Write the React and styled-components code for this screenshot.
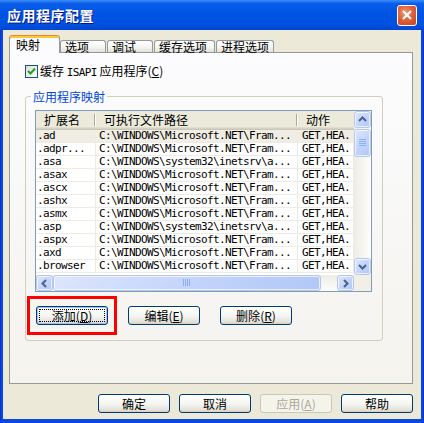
import React from 'react';
import styled, { createGlobalStyle, css } from 'styled-components';

const GlobalStyle = createGlobalStyle`
  html, body { margin: 0; padding: 0; background: #fff; }
  body {
    font-family: "SimSun", "Noto Sans CJK SC", sans-serif;
    font-size: 12px;
    color: #000;
  }
`;

const MS = 'C:\\WINDOWS\\Microsoft.NET\\Fram...';
const SYS = 'C:\\WINDOWS\\system32\\inetsrv\\a...';

const rows = [
  ['.ad', MS],
  ['.adpr...', MS],
  ['.asa', SYS],
  ['.asax', MS],
  ['.ascx', MS],
  ['.ashx', MS],
  ['.asmx', MS],
  ['.asp', SYS],
  ['.aspx', MS],
  ['.axd', MS],
  ['.browser', MS],
];

const tabs = [
  { label: '映射', w: 51, active: true },
  { label: '选项', w: 46 },
  { label: '调试', w: 46 },
  { label: '缓存选项', w: 61 },
  { label: '进程选项', w: 58 },
];

const Window = styled.div`
  width: 424px;
  height: 423px;
  box-sizing: border-box;
  background: linear-gradient(90deg, #0831D9, #0A48E0 2px, #0A48E0 calc(100% - 2px), #0831D9);
  display: flex;
  flex-direction: column;
`;

const TitleBar = styled.div`
  height: 30px;
  flex: none;
  display: flex;
  align-items: center;
  justify-content: space-between;
  padding: 0 7px 0 7px;
  background: linear-gradient(180deg, #3C8CF8 0%, #0A5DEB 12%, #0054E3 45%, #0052E0 80%, #0046D0 100%);
`;

const Title = styled.span`
  color: #fff;
  font-weight: bold;
  font-size: 14px;
  letter-spacing: 0.5px;
  text-shadow: 1px 1px 0 #0A1883;
`;

const CloseBox = styled.div`
  width: 20px;
  height: 21px;
  box-sizing: border-box;
  border: 1px solid #fff;
  border-radius: 3px;
  background: radial-gradient(circle at 40% 35%, #F09C7E 0%, #E1603A 45%, #C7401C 100%);
  display: flex;
  align-items: center;
  justify-content: center;
`;

const Body = styled.div`
  flex: 1;
  margin: 0 3px 4px;
  background: #ECE9D8;
  padding: 5px 8px 0 6px;
  display: flex;
  flex-direction: column;
`;

const TabStrip = styled.div`
  height: 18px;
  display: flex;
  align-items: flex-end;
  position: relative;
  z-index: 1;
`;

const Tab = styled.div`
  box-sizing: border-box;
  width: ${p => p.$w}px;
  border: 1px solid #919B9C;
  border-bottom: none;
  border-radius: 3px 3px 0 0;
  font-size: 12px;
  white-space: nowrap;
  ${p => p.$active ? css`
    height: 18px;
    margin-right: 0;
    padding: 2px 0 0 6px;
    line-height: 14px;
    background: #FCFCFE;
    border-top: 1px solid #E68B2C;
    box-shadow: inset 0 2px 0 #FFC73C;
  ` : css`
    height: 12px;
    margin: 0 1px 1px 0;
    padding-left: 4px;
    line-height: 11px;
    background: linear-gradient(#FFFFFF, #F3F3EF 60%, #E3E1D8);
  `}
`;

const Panel = styled.div`
  height: 332px;
  margin-top: -1px;
  box-sizing: border-box;
  border: 1px solid #919B9C;
  background: linear-gradient(#FCFCFE, #F4F3EE);
  padding: 12px 0 0 15px;
  display: flex;
  flex-direction: column;
`;

const CheckRow = styled.label`
  display: flex;
  align-items: center;
  gap: 2px;
  height: 13px;
  line-height: 13px;
`;

const CheckBox = styled.span`
  width: 13px;
  height: 13px;
  box-sizing: border-box;
  border: 1px solid #1C5180;
  background: linear-gradient(135deg, #DCDCD7, #FFFFFF);
  display: flex;
  align-items: center;
  justify-content: center;
`;

const monoText = css`
  font-family: "DejaVu Sans Mono", "Liberation Mono", monospace;
  font-size: 11px;
  letter-spacing: -0.62px;
`;

const Latin = styled.span`
  ${monoText};
`;

const Group = styled.fieldset`
  margin: 12px 0 0 0;
  width: 358px;
  box-sizing: border-box;
  border: 1px solid #D0D0BF;
  border-radius: 3px;
  padding: 0 0 15px 9px;
  min-inline-size: 0;
`;

const GroupLabel = styled.legend`
  color: #0046D5;
  padding: 0 2px;
  margin-left: -4px;
  line-height: 13px;
  font-size: 12px;
`;

const ListView = styled.div`
  margin-top: 7px;
  width: 337px;
  height: 182px;
  box-sizing: border-box;
  border: 1px solid #7F9DB9;
  background: #fff;
  display: grid;
  grid-template-columns: 318px 17px;
  grid-template-rows: 164px 16px;
`;

const TableArea = styled.div`
  overflow: hidden;
  display: flex;
  flex-direction: column;
`;

const Cols = css`
  display: grid;
  grid-template-columns: 60px 202px 56px;
`;

const Header = styled.div`
  ${Cols};
  height: 19px;
  flex: none;
  box-sizing: border-box;
  background: #EBEADB;
  box-shadow: inset 0 -1px #CBC7B8, inset 0 -2px #D6D2C2, inset 0 -3px #E2DECD;
`;

const HeaderCell = styled.div`
  padding-left: 8px;
  line-height: 17px;
  white-space: nowrap;
  overflow: hidden;
  background: ${p => p.$sep
    ? 'linear-gradient(90deg, #ACA899 50%, #fff 50%) right 0 top 3px / 2px 12px no-repeat'
    : 'none'};
`;

const Row = styled.div`
  ${Cols};
  height: 13px;
  flex: none;
  box-sizing: border-box;
  border-bottom: 1px solid #EDEBE3;
  background: ${p => p.$selected ? '#EFEDE4' : '#fff'};
`;

const Cell = styled.div`
  ${monoText};
  line-height: 12px;
  padding-left: ${p => p.$pad}px;
  white-space: nowrap;
  overflow: hidden;
  border-right: 1px solid #EDEBE3;
`;

const VScroll = styled.div`
  display: flex;
  flex-direction: column;
  background: linear-gradient(90deg, #EEEDE5, #FDFDFA);
`;

const HScroll = styled.div`
  display: flex;
  background: linear-gradient(#EEEDE5, #FDFDFA);
`;

const Corner = styled.div`
  background: #F1EFE6;
`;

const blueBlock = css`
  box-sizing: border-box;
  border: 1px solid #B4C7F1;
  border-radius: 3px;
  box-shadow: inset 0 0 0 1px rgba(255, 255, 255, 0.7);
  background: linear-gradient(135deg, #DCE6FD, #C2D3FB 55%, #B2C7F6);
  display: flex;
  align-items: center;
  justify-content: center;
`;

const ScrollBtn = styled.div`
  ${blueBlock};
  width: ${p => p.$w || 17}px;
  height: ${p => p.$h || 17}px;
  flex: none;
`;

const Track = styled.div`
  flex: 1;
  display: flex;
  flex-direction: ${p => p.$vertical ? 'column' : 'row'};
`;

const Thumb = styled.div`
  ${blueBlock};
  flex: none;
  ${p => p.$vertical ? css`
    width: 17px;
    height: 28px;
    margin-top: 1px;
  ` : css`
    width: 268px;
    height: 16px;
  `}
`;

const ButtonRow = styled.div`
  display: flex;
  gap: 20px;
  margin: 14px 0 0 1px;
`;

const HighlightWrap = styled.div`
  position: relative;
  display: flex;
`;

const RedFrame = styled.div`
  position: absolute;
  top: -10px;
  bottom: -10px;
  left: -9px;
  right: -9px;
  border: 3px solid #FF0000;
  pointer-events: none;
`;

const Button = styled.button`
  width: 72px;
  height: 19px;
  box-sizing: border-box;
  border: 1px solid #003C74;
  border-radius: 3px;
  padding: 0;
  font-family: "SimSun", "Noto Sans CJK SC", sans-serif;
  font-size: 12px;
  line-height: 16px;
  color: #000;
  background: linear-gradient(#FFFFFF, #F4F4F0 55%, #E5E3DA 85%, #D6D0C5);
  ${p => p.$default && css`
    box-shadow: inset 0 0 0 1px #A6C0F2;
    outline: 1px dotted #000;
    outline-offset: -4px;
  `}
  &:disabled {
    border-color: #C9C7BA;
    color: #ACA899;
    background: #F5F4EA;
  }
`;

const Footer = styled.div`
  display: flex;
  justify-content: flex-end;
  gap: 9px;
  margin-top: 10px;
`;

const Arrow = ({ dir }) => {
  const d = {
    up: 'M4 9 L7.5 5.5 L11 9',
    down: 'M4 6 L7.5 9.5 L11 6',
    left: 'M9 4 L5.5 7.5 L9 11',
    right: 'M6 4 L9.5 7.5 L6 11',
  }[dir];
  return (
    <svg width="15" height="15" viewBox="0 0 15 15">
      <path d={d} fill="none" stroke="#4D6185" strokeWidth="2" />
    </svg>
  );
};

const Grip = ({ vertical }) => (
  <svg width={8} height={8} viewBox="0 0 8 8">
    {[0, 2, 4, 6].map(i => vertical
      ? <line key={i} x1="0" y1={i + 0.5} x2="7" y2={i + 0.5} stroke="#8CB0F8" />
      : <line key={i} x1={i + 0.5} y1="0" x2={i + 0.5} y2="7" stroke="#8CB0F8" />)}
  </svg>
);

const Mn = ({ k }) => <>(<u>{k}</u>)</>;

export default function App() {
  return (
    <>
      <GlobalStyle />
      <Window>
        <TitleBar>
          <Title>应用程序配置</Title>
          <CloseBox>
            <svg width="12" height="12" viewBox="0 0 12 12">
              <path d="M2 2 L10 10 M10 2 L2 10" stroke="#fff" strokeWidth="2.2" />
            </svg>
          </CloseBox>
        </TitleBar>
        <Body>
          <TabStrip>
            {tabs.map(t => (
              <Tab key={t.label} $w={t.w} $active={t.active}>{t.label}</Tab>
            ))}
          </TabStrip>
          <Panel>
            <CheckRow>
              <CheckBox>
                <svg width="9" height="9" viewBox="0 0 9 9">
                  <path d="M1 4 L3.5 6.5 L8 1.5" fill="none" stroke="#21A121" strokeWidth="2" />
                </svg>
              </CheckBox>
              <span>缓存 <Latin>ISAPI</Latin> 应用程序<Mn k="C" /></span>
            </CheckRow>
            <Group>
              <GroupLabel>应用程序映射</GroupLabel>
              <ListView>
                <TableArea>
                  <Header>
                    <HeaderCell $sep>扩展名</HeaderCell>
                    <HeaderCell $sep>可执行文件路径</HeaderCell>
                    <HeaderCell>动作</HeaderCell>
                  </Header>
                  {rows.map(([ext, path], i) => (
                    <Row key={ext} $selected={i === 0}>
                      <Cell $pad={1}>{ext}</Cell>
                      <Cell $pad={3}>{path}</Cell>
                      <Cell $pad={4}>GET,HEA.</Cell>
                    </Row>
                  ))}
                </TableArea>
                <VScroll>
                  <ScrollBtn><Arrow dir="up" /></ScrollBtn>
                  <Track $vertical>
                    <Thumb $vertical><Grip vertical /></Thumb>
                  </Track>
                  <ScrollBtn><Arrow dir="down" /></ScrollBtn>
                </VScroll>
                <HScroll>
                  <ScrollBtn $h={16}><Arrow dir="left" /></ScrollBtn>
                  <Track>
                    <Thumb><Grip /></Thumb>
                  </Track>
                  <ScrollBtn $h={16}><Arrow dir="right" /></ScrollBtn>
                </HScroll>
                <Corner />
              </ListView>
              <ButtonRow>
                <HighlightWrap>
                  <Button $default>添加<Mn k="D" /></Button>
                  <RedFrame />
                </HighlightWrap>
                <Button>编辑<Mn k="E" /></Button>
                <Button>删除<Mn k="R" /></Button>
              </ButtonRow>
            </Group>
          </Panel>
          <Footer>
            <Button>确定</Button>
            <Button>取消</Button>
            <Button disabled>应用<Mn k="A" /></Button>
            <Button>帮助</Button>
          </Footer>
        </Body>
      </Window>
    </>
  );
}
